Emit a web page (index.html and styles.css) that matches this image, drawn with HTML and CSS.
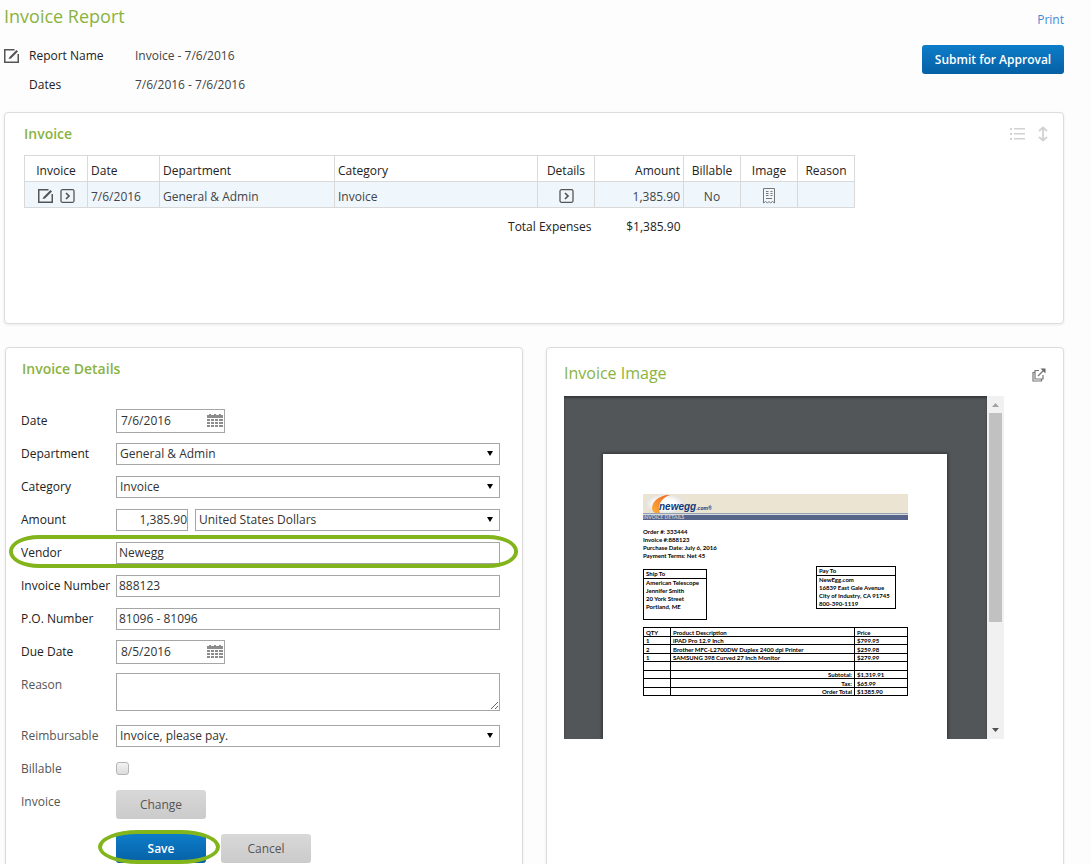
FILE: index.html
```html
<!DOCTYPE html>
<html lang="en">
<head>
  <meta charset="UTF-8">
  <meta name="viewport" content="width=device-width, initial-scale=1.0">
  <title>Invoice Report</title>
  <link rel="stylesheet" href="styles.css">
</head>
<body>
  <main class="page">
    <header class="report">
      <div class="report__info">
        <h1 class="report__title">Invoice Report</h1>
        <div class="report__row">
          <a href="#" class="icon-link" aria-label="Edit report name">
            <svg width="16" height="16" viewBox="0 0 16 16"><path d="M10.500 1.750H.75V14.250H14.250V6" fill="none" stroke="#555" stroke-width="1.500"/><path d="M4.500 11L5.500 9 12.500 2 14 3.500 7 10.500Z" fill="#555"/></svg>
          </a>
          <span class="report__label">Report Name</span>
          <span>Invoice - 7/6/2016</span>
        </div>
        <div class="report__row">
          <span></span>
          <span class="report__label">Dates</span>
          <span>7/6/2016 - 7/6/2016</span>
        </div>
      </div>
      <div class="report__actions">
        <a href="#" class="report__print">Print</a>
        <button type="button" class="btn btn--primary btn--submit">Submit for Approval</button>
      </div>
    </header>

    <section class="card card--invoice">
      <div class="card__head">
        <h2 class="card__title">Invoice</h2>
        <div class="card__tools">
          <svg width="15" height="14" viewBox="0 0 15 14" fill="#d2d2d2"><path d="M0 1h2v2H0zM4 1h11v1.500H4zM0 6h2v2H0zM4 6h11v1.500H4zM0 11h2v2H0zM4 11h11v1.500H4z"/></svg>
          <svg width="10" height="16" viewBox="0 0 10 16" fill="none" stroke="#d2d2d2" stroke-width="1.800"><path d="M5 1.500V14.500M1 5L5 1.500 9 5M1 11L5 14.500 9 11"/></svg>
        </div>
      </div>
      <table class="expenses">
        <colgroup>
          <col class="w63"><col class="w72"><col class="w175"><col class="w203"><col class="w57"><col class="w89"><col class="w57"><col class="w57"><col class="w57">
        </colgroup>
        <thead>
          <tr>
            <th class="center">Invoice</th>
            <th>Date</th>
            <th>Department</th>
            <th>Category</th>
            <th class="center">Details</th>
            <th class="right">Amount</th>
            <th class="center">Billable</th>
            <th class="center">Image</th>
            <th class="center">Reason</th>
          </tr>
        </thead>
        <tbody>
          <tr>
            <td class="center">
              <div class="expenses__icons">
                <a href="#" class="icon-link" aria-label="Edit">
                  <svg width="16" height="16" viewBox="0 0 16 16"><path d="M10.500 1.750H.75V14.250H14.250V6" fill="none" stroke="#555" stroke-width="1.500"/><path d="M4.500 11L5.500 9 12.500 2 14 3.500 7 10.500Z" fill="#555"/></svg>
                </a>
                <a href="#" class="icon-link" aria-label="Open">
                  <svg width="15" height="14" viewBox="0 0 15 14" fill="none" stroke="#555" stroke-width="1.300"><rect x="1" y=".7" width="13" height="12.600" rx="1.500"/><path d="M6 4L9 7 6 10" stroke-width="1.700"/></svg>
                </a>
              </div>
            </td>
            <td>7/6/2016</td>
            <td>General &amp; Admin</td>
            <td>Invoice</td>
            <td>
              <div class="expenses__icons">
                <a href="#" class="icon-link" aria-label="Details">
                  <svg width="15" height="14" viewBox="0 0 15 14" fill="none" stroke="#555" stroke-width="1.300"><rect x="1" y=".7" width="13" height="12.600" rx="1.500"/><path d="M6 4L9 7 6 10" stroke-width="1.700"/></svg>
                </a>
              </div>
            </td>
            <td class="right">1,385.90</td>
            <td class="center">No</td>
            <td>
              <div class="expenses__icons">
                <a href="#" class="icon-link" aria-label="Image">
                  <svg width="12" height="16" viewBox="0 0 12 16" fill="none" stroke="#777"><path d="M.5.5H11.500V15L9.500 13.500 7.500 15 6 13.500 4.500 15 2.500 13.500.5 15Z"/><path d="M3 3.500H5.500M7.500 3.500H9.500M3 5.500H5.500M7.500 5.500H9.500M3 7.500H5.500M7.500 7.500H9.500M3 10.500H9"/></svg>
                </a>
              </div>
            </td>
            <td></td>
          </tr>
        </tbody>
        <tfoot>
          <tr>
            <td colspan="5" class="right">Total Expenses</td>
            <td class="right expenses__total">$1,385.90</td>
            <td colspan="3"></td>
          </tr>
        </tfoot>
      </table>
    </section>

    <div class="columns">
      <section class="card card--details">
        <h2 class="card__title details__title">Invoice Details</h2>
        <form class="form">
          <div class="form__row">
            <label for="date">Date</label>
            <div class="datebox">
              <input type="text" id="date" value="7/6/2016">
              <svg width="16" height="14" viewBox="0 0 16 14" fill="#8c8c8c"><path d="M0 1H2V0H4V1H7V0H9V1H12V0H14V1H16V4H0ZM0 5H3V7H0ZM4 5H7V7H4ZM8 5H11V7H8ZM12 5H16V7H12ZM0 8H3V10H0ZM4 8H7V10H4ZM8 8H11V10H8ZM12 8H16V10H12ZM0 11H3V13H0ZM4 11H7V13H4ZM8 11H11V13H8ZM12 11H16V13H12Z"/></svg>
            </div>
          </div>
          <div class="form__row">
            <label for="department">Department</label>
            <select id="department"><option>General &amp; Admin</option></select>
          </div>
          <div class="form__row">
            <label for="category">Category</label>
            <select id="category"><option>Invoice</option></select>
          </div>
          <div class="form__row">
            <label for="amount">Amount</label>
            <div class="form__pair">
              <input type="text" id="amount" value="1,385.90">
              <select id="currency" aria-label="Currency"><option>United States Dollars</option></select>
            </div>
          </div>
          <div class="form__row marked">
            <label for="vendor">Vendor</label>
            <input type="text" id="vendor" value="Newegg">
          </div>
          <div class="form__row">
            <label for="number">Invoice Number</label>
            <input type="text" id="number" value="888123">
          </div>
          <div class="form__row">
            <label for="po">P.O. Number</label>
            <input type="text" id="po" value="81096 - 81096">
          </div>
          <div class="form__row">
            <label for="due">Due Date</label>
            <div class="datebox">
              <input type="text" id="due" value="8/5/2016">
              <svg width="16" height="14" viewBox="0 0 16 14" fill="#8c8c8c"><path d="M0 1H2V0H4V1H7V0H9V1H12V0H14V1H16V4H0ZM0 5H3V7H0ZM4 5H7V7H4ZM8 5H11V7H8ZM12 5H16V7H12ZM0 8H3V10H0ZM4 8H7V10H4ZM8 8H11V10H8ZM12 8H16V10H12ZM0 11H3V13H0ZM4 11H7V13H4ZM8 11H11V13H8ZM12 11H16V13H12Z"/></svg>
            </div>
          </div>
          <div class="form__row form__row--top form__row--optional">
            <label for="reason">Reason</label>
            <textarea id="reason"></textarea>
          </div>
          <div class="form__row form__row--optional">
            <label for="reimbursable">Reimbursable</label>
            <select id="reimbursable"><option>Invoice, please pay.</option></select>
          </div>
          <div class="form__row form__row--optional">
            <label for="billable">Billable</label>
            <input type="checkbox" id="billable">
          </div>
          <div class="form__row form__row--top form__row--optional">
            <label for="change">Invoice</label>
            <button type="button" id="change" class="btn btn--grey">Change</button>
          </div>
          <div class="form__buttons">
            <span class="save">
              <button type="submit" class="btn btn--primary">Save</button>
            </span>
            <button type="button" class="btn btn--grey">Cancel</button>
          </div>
        </form>
      </section>

      <section class="card card--image">
        <div class="image__head">
          <h2 class="image__title">Invoice Image</h2>
          <a href="#" class="icon-link" aria-label="Open in new window">
            <svg width="14" height="14" viewBox="0 0 14 14" fill="none" stroke="#777" stroke-width="1.200"><path d="M7 2.500H3V11H11V7"/><path d="M3 4.500H1V13H9.500V11"/><path d="M6 8L12 2"/><path d="M8.500.5H13.500V5.500Z" fill="#666" stroke="none"/></svg>
          </a>
        </div>
        <div class="viewer">
          <div class="viewer__canvas">
            <div class="paper">
              <div class="banner">
                <svg width="80" height="19" viewBox="0 0 80 19">
                  <defs>
                    <linearGradient id="sun" x1="0" y1="1" x2="1" y2="0"><stop offset="0" stop-color="#fbb03b"/><stop offset="1" stop-color="#f0641e"/></linearGradient>
                    <radialGradient id="egg"><stop offset=".5" stop-color="#fff"/><stop offset="1" stop-color="#e3e0dc"/></radialGradient>
                  </defs>
                  <ellipse cx="22" cy="10" rx="20" ry="10" fill="url(#egg)"/>
                  <path d="M27 1C18 0 9 7 9 14C9 17 11 19 13 19H17C14 12 18 4 27 1Z" fill="url(#sun)"/>
                  <text x="16" y="16" class="banner__name">newegg<tspan class="banner__com">.com®</tspan></text>
                </svg>
                <div class="banner__strip">INVOICE DETAILS</div>
              </div>
              <p class="order">Order #: 333444<br>Invoice #:888123<br>Purchase Date: July 6, 2016<br>Payment Terms: Net 45</p>
              <div class="parties">
                <div class="party party--ship">
                  <div class="party__head">Ship To</div>
                  American Telescope<br>Jennifer Smith<br>20 York Street<br>Portland, ME
                </div>
                <div class="party party--pay">
                  <div class="party__head">Pay To</div>
                  NewEgg.com<br>16839 East Gale Avenue<br>City of Industry, CA 91745<br>800-390-1119
                </div>
              </div>
              <table class="items">
                <colgroup><col class="w27"><col><col class="w53"></colgroup>
                <tr><th>QTY</th><th>Product Description</th><th>Price</th></tr>
                <tr><td>1</td><td>iPAD Pro 12.9 Inch</td><td>$799.95</td></tr>
                <tr><td>2</td><td>Brother MFC-L2700DW Duplex 2400 dpi Printer</td><td>$259.98</td></tr>
                <tr><td>1</td><td>SAMSUNG 398 Curved 27 Inch Monitor</td><td>$279.99</td></tr>
                <tr><td></td><td></td><td></td></tr>
                <tr><td></td><td class="right">Subtotal:</td><td>$1,319.91</td></tr>
                <tr><td></td><td class="right">Tax:</td><td>$65.99</td></tr>
                <tr><td></td><td class="right">Order Total</td><td>$1385.90</td></tr>
              </table>
            </div>
          </div>
          <div class="scrollbar">
            <svg width="17" height="17" viewBox="0 0 17 17"><path d="M5 11L8.500 7 12 11Z" fill="#a3a3a3"/></svg>
            <div class="scrollbar__thumb"></div>
            <svg width="17" height="17" viewBox="0 0 17 17"><path d="M5 6L8.500 10 12 6Z" fill="#505050"/></svg>
          </div>
        </div>
      </section>
    </div>
  </main>
</body>
</html>
```
FILE: styles.css
```css
*,
*::before,
*::after {
  box-sizing: border-box;
}
body {
  margin: 0;
  background-color: #fdfdfd;
  color: #444;
  font-family: "Open Sans", "Liberation Sans", sans-serif;
  font-size: 12px;
  line-height: 18px;
}
h1, h2, p {
  margin: 0;
}
a {
  color: #3f8ad8;
  text-decoration: none;
}
svg {
  display: block;
}
input, select, textarea, button {
  font: inherit;
  margin: 0;
}
.page {
  height: 100vh;
  overflow: auto;
  scrollbar-width: none;
  padding: 4px 27px 0 4px;
}
.center {
  text-align: center;
}
.right {
  text-align: right;
}
.icon-link {
  display: block;
}

/* buttons */
.btn {
  width: 90px;
  height: 29px;
  padding: 0;
  border: none;
  border-radius: 3px;
}
.btn--primary {
  background: linear-gradient(#0d7dc9, #0660a5);
  color: #fff;
  font-weight: 600;
}
.btn--grey {
  background: linear-gradient(#d8d8d8, #cbcbcb);
  color: #555;
  font-weight: 500;
}
.btn--submit {
  width: 142px;
  margin-top: 13px;
}

/* report header */
.report {
  display: flex;
  justify-content: space-between;
  margin-bottom: 13px;
}
.report__title {
  margin-bottom: 13px;
  color: #8ab33f;
  font-size: 18px;
  font-weight: 400;
  line-height: 24px;
}
.report__row {
  display: grid;
  grid-template-columns: 25px 106px auto;
  align-items: center;
  height: 29px;
}
.report__label {
  color: #222;
  font-weight: 500;
}
.report__actions {
  display: flex;
  flex-direction: column;
  align-items: flex-end;
  padding-top: 4px;
}
.report__print {
  line-height: 24px;
}

/* cards */
.card {
  background-color: #fff;
  border: 1px solid #dcdcdc;
  border-radius: 4px;
  box-shadow: 0 1px 3px rgba(0, 0, 0, 0.08);
}
.card__title {
  color: #8ab33f;
  font-size: 14px;
  font-weight: 600;
  line-height: 22px;
}
.card--invoice {
  min-height: 212px;
  padding: 10px 15px 0 19px;
  margin-bottom: 23px;
}
.card__head {
  display: flex;
  justify-content: space-between;
  margin-bottom: 10px;
}
.card__tools {
  display: flex;
  align-items: center;
  gap: 13px;
}

/* expenses table */
.expenses {
  width: 831px;
  table-layout: fixed;
  border-collapse: collapse;
}
.expenses th,
.expenses td {
  height: 26px;
  padding: 4px 3px 0;
  border: 1px solid #d9d9d9;
}
.expenses th {
  color: #222;
  font-weight: 400;
  text-align: left;
}
.expenses th.center {
  text-align: center;
}
.expenses th.right {
  text-align: right;
}
.expenses tbody td {
  background-color: #eff7fd;
}
.expenses tfoot td {
  height: 34px;
  border: none;
  color: #222;
}
.expenses tfoot .expenses__total {
  font-weight: 500;
}
.expenses__icons {
  display: flex;
  align-items: center;
  justify-content: center;
  gap: 6px;
  padding-bottom: 2px;
}
.w27 { width: 27px; }
.w53 { width: 53px; }
.w57 { width: 57px; }
.w63 { width: 63px; }
.w72 { width: 72px; }
.w89 { width: 89px; }
.w175 { width: 175px; }
.w203 { width: 203px; }

/* lower part */
.columns {
  display: grid;
  grid-template-columns: 1fr 1fr;
  gap: 23px;
  padding-left: 1px;
}
.card--details {
  padding: 10px 22px 20px 15px;
}
.details__title {
  margin-bottom: 24px;
  padding-left: 1px;
}
.form__row {
  position: relative;
  display: grid;
  grid-template-columns: 95px 1fr;
  align-items: center;
  min-height: 33px;
}
.form__row label {
  color: #222;
  font-weight: 500;
  white-space: nowrap;
}
.form__row--optional label {
  color: #555;
  font-weight: 400;
}
.form__row--top {
  align-items: start;
  padding: 5px 0 8px;
}
.form__row--top label {
  padding-top: 3px;
}
.form input[type="text"],
.form select,
.form textarea {
  width: 100%;
  height: 22px;
  padding: 0 3px;
  border: 1px solid #a6a6a6;
  border-radius: 0;
  background-color: #fff;
  color: #333;
}
.form input[type="text"] {
  padding: 0 2px;
}
.form select {
  appearance: none;
  background-image: url("data:image/svg+xml,%3Csvg xmlns='http://www.w3.org/2000/svg' width='6' height='5'%3E%3Cpath d='M0 0H6L3 5Z'/%3E%3C/svg%3E");
  background-repeat: no-repeat;
  background-position: right 6px center;
}
.form textarea {
  display: block;
  height: 38px;
}
.form input[type="checkbox"] {
  appearance: none;
  width: 13px;
  height: 13px;
  border: 1px solid #b4b4b4;
  border-radius: 3px;
  background: linear-gradient(#f2f2f2, #dcdcdc);
}
.datebox {
  position: relative;
  width: 109px;
}
.form .datebox input[type="text"] {
  display: block;
  height: 24px;
  padding: 0 4px;
}
.datebox svg {
  position: absolute;
  top: 5px;
  right: 2px;
}
.form__pair {
  display: grid;
  grid-template-columns: 72px 1fr;
  gap: 7px;
}
.form__pair input[type="text"] {
  padding: 0;
  text-align: right;
}
.form__buttons {
  display: flex;
  gap: 15px;
  padding: 7px 0 0 95px;
}
.save {
  position: relative;
}

/* green rings round the vendor row and the save button */
.marked::after,
.save::after {
  content: "";
  position: absolute;
  border: 4px solid #82b51b;
  pointer-events: none;
}
.marked::after {
  inset: -1px -18px 1px -12px;
  border-radius: 30px / 16px;
}
.save::after {
  inset: -4px -14px -1px -18px;
  border-radius: 40px / 17px;
}

/* invoice image */
.card--image {
  padding: 13px 17px 20px 17px;
}
.image__head {
  display: flex;
  justify-content: space-between;
  align-items: flex-end;
  margin-bottom: 11px;
}
.image__head .icon-link {
  padding-bottom: 3px;
}
.image__title {
  color: #8ab33f;
  font-size: 16px;
  font-weight: 400;
  line-height: 24px;
}
.viewer {
  display: flex;
  width: 440px;
  height: 343px;
}
.viewer__canvas {
  flex: 1;
  padding: 58px 40px 0 39px;
  overflow: hidden;
  background-color: #525659;
  box-shadow: inset 0 2px 2px rgba(0, 0, 0, 0.35);
}
.scrollbar {
  display: flex;
  flex-direction: column;
  width: 17px;
  background-color: #f1f1f1;
}
.scrollbar__thumb {
  height: 209px;
  margin: 0 2px auto;
  background-color: #c1c1c1;
}
.paper {
  height: 100%;
  padding: 40px 39px 0 40px;
  background-color: #fff;
  box-shadow: 0 0 3px 1px rgba(0, 0, 0, 0.4);
  color: #000;
  font-family: Lato, "Open Sans", sans-serif;
  font-size: 6px;
  font-weight: 700;
  line-height: 8px;
}
.banner {
  margin-bottom: 8px;
  background-color: #ece4d2;
}
.banner__name {
  fill: #123a7c;
  font: italic 700 10px "Liberation Sans", sans-serif;
}
.banner__com {
  font-size: 5px;
}
.banner__strip {
  height: 7px;
  border-top: 1px solid #93a3b3;
  background: linear-gradient(#d5dade 1px, #566489 1px);
  color: #c5cbd8;
  font-size: 5px;
  line-height: 7px;
}
.order {
  height: 38px;
}
.parties {
  display: flex;
  justify-content: space-between;
  align-items: flex-start;
  margin-bottom: 7px;
  padding-right: 12px;
}
.party {
  border: 1px solid #000;
  padding: 0 2px;
  white-space: nowrap;
}
.party__head {
  margin: 0 -2px;
  padding: 0 2px;
  border-bottom: 1px solid #000;
}
.party--ship {
  width: 64px;
  height: 51px;
  margin-top: 3px;
}
.party--pay {
  width: 80px;
  height: 43px;
}
.items {
  width: 100%;
  table-layout: fixed;
  border-collapse: collapse;
}
.items th,
.items td {
  height: 9px;
  padding: 0 2px;
  border: 1px solid #000;
  line-height: 7px;
  text-align: left;
}
.items tr:nth-child(even) td {
  height: 8px;
}
.items td.right {
  text-align: right;
}
```
